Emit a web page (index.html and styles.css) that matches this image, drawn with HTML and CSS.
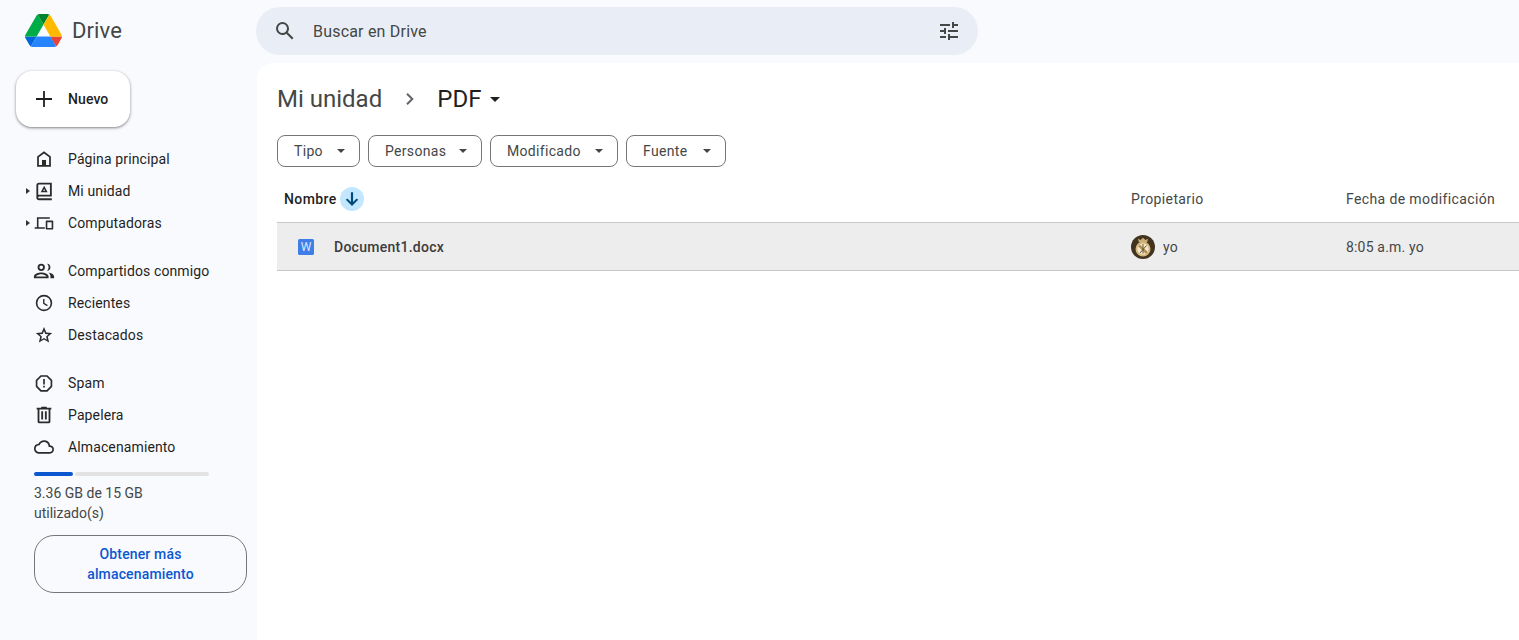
FILE: index.html
```html
<!DOCTYPE html>
<html lang="es">
<head>
<meta charset="utf-8">
<title>Drive</title>
<link rel="stylesheet" href="styles.css">
</head>
<body>
<div class="app">
  <aside class="sidebar">
    <div class="brand">
      <svg class="brand-logo" viewBox="0 0 87.3 78"><path d="m6.6 66.85 3.85 6.65c.8 1.4 1.95 2.5 3.3 3.3l13.75-23.8h-27.5c0 1.55.4 3.1 1.2 4.5z" fill="#0066da"/><path d="m43.65 25-13.75-23.8c-1.35.8-2.5 1.9-3.3 3.3l-25.4 44a9.06 9.06 0 0 0 -1.2 4.5h27.5z" fill="#00ac47"/><path d="m73.55 76.8c1.35-.8 2.5-1.9 3.3-3.3l1.6-2.75 7.65-13.25c.8-1.4 1.2-2.95 1.2-4.5h-27.502l5.852 11.5z" fill="#ea4335"/><path d="m43.65 25 13.75-23.8c-1.35-.8-2.9-1.2-4.5-1.2h-18.5c-1.6 0-3.15.45-4.5 1.2z" fill="#00832d"/><path d="m59.8 53h-32.3l-13.75 23.8c1.35.8 2.9 1.2 4.5 1.2h50.8c1.6 0 3.15-.45 4.5-1.2z" fill="#2684fc"/><path d="m73.4 26.5-12.7-22c-.8-1.4-1.95-2.5-3.3-3.3l-13.75 23.8 16.15 28h27.45c0-1.55-.4-3.1-1.2-4.5z" fill="#ffba00"/></svg>
      <span class="brand-name">Drive</span>
    </div>
    <button class="new-btn">
      <svg class="new-icon" viewBox="0 0 24 24"><path d="M20 12.9h-7.1V20h-1.8v-7.1H4v-1.8h7.1V4h1.8v7.1H20z"/></svg>
      <span>Nuevo</span>
    </button>
    <nav class="nav">
      <div class="nav-group">
        <a class="nav-item"><svg class="nav-icon" viewBox="0 0 24 24"><path d="M12 3.500 4.500 9.200V20.500h15V9.200L12 3.500zm5.600 15.100h-3.400v-5.400H9.800v5.400H6.400v-8.500L12 5.900l5.600 4.200v8.500z"/><path d="M9.800 13.200h4.400v5.800H9.800z"/></svg><span>Página principal</span></a>
        <a class="nav-item"><span class="tree-arrow"></span><svg class="nav-icon" viewBox="0 0 24 24"><path d="M6.500 3h14v15H6.700c-.6 0-1 .4-1 1s.4 1 1 1H20.500v2H6.700A3 3 0 0 1 3.700 19V5.800A2.800 2.800 0 0 1 6.500 3zm-.8 13.200c.3-.1.700-.2 1-.2h11.800V5H6.500c-.4 0-.8.4-.8.800v10.400z"/><path d="M12.200 6.400 16 13.400H8.400l3.800-7zm0 3.400-1.100 1.800h2.200l-1.100-1.800z"/></svg><span>Mi unidad</span></a>
        <a class="nav-item"><span class="tree-arrow"></span><svg class="nav-icon nav-icon-wide" viewBox="0 0 24 24"><path d="M3.500 5h15.500v2H5.400v10H13v2H.8v-2h2.700V5z"/><path d="M15 9h7.200c.5 0 .9.4.9.9V19c0 .5-.4.9-.9.9H15c-.5 0-.9-.4-.9-.9V9.900c0-.5.4-.9.9-.9zm1 2v7h5.200v-7H16z"/></svg><span>Computadoras</span></a>
      </div>
      <div class="nav-group">
        <a class="nav-item"><svg class="nav-icon" viewBox="0 0 24 24"><path d="M9 12a4 4 0 1 0 0-8 4 4 0 0 0 0 8zm0-6a2 2 0 1 1 0 4 2 2 0 0 1 0-4zm0 7.500c-3 0-8 1.500-8 4.300V20h16v-2.200c0-2.800-5-4.300-8-4.300zM3.100 18c.3-.9 3.500-2.500 5.900-2.500s5.600 1.600 5.900 2.500H3.100z"/><path d="M15.200 4.100c1.300.9 1.800 2.200 1.800 3.900s-.6 3-1.800 3.900c2.300.2 3.800-1.600 3.800-3.900s-1.500-4.100-3.800-3.900zM16.800 13.500c1.400 1 2.200 2.400 2.200 4.300V20h4v-2.200c0-2.300-3.800-3.900-6.200-4.300z"/></svg><span>Compartidos conmigo</span></a>
        <a class="nav-item"><svg class="nav-icon" viewBox="0 0 24 24"><path d="M12 3a9 9 0 1 0 0 18 9 9 0 0 0 0-18zm0 16.200a7.200 7.200 0 1 1 0-14.400 7.200 7.200 0 0 1 0 14.400z"/><path d="M12.500 7.500H11v5.400l4.300 2.600.8-1.200-3.600-2.200z"/></svg><span>Recientes</span></a>
        <a class="nav-item"><svg class="nav-icon" viewBox="0 0 24 24"><path d="M21 9.800l-6.500-.6L12 3.200 9.500 9.200 3 9.800l4.900 4.200-1.500 6.300L12 17l5.600 3.300-1.500-6.300L21 9.800zm-9 5.400-3.100 1.900.8-3.500-2.700-2.400 3.600-.3L12 7.600l1.400 3.300 3.600.3-2.700 2.400.8 3.500-3.100-1.900z"/></svg><span>Destacados</span></a>
      </div>
      <div class="nav-group">
        <a class="nav-item"><svg class="nav-icon" viewBox="0 0 24 24"><path d="M15.700 3.500H8.300L3 8.800v7.400l5.300 5.300h7.400l5.300-5.300V8.800l-5.300-5.300zm3.500 11.900-4.300 4.300H9.100l-4.300-4.300V9.600l4.300-4.300h5.800l4.300 4.300v5.800z"/><path d="M11.100 7.500h1.800v6h-1.800zM11.100 15h1.800v1.800h-1.800z"/></svg><span>Spam</span></a>
        <a class="nav-item"><svg class="nav-icon" viewBox="0 0 24 24"><path d="M15 4V3H9v1H4v2h1v13a2 2 0 0 0 2 2h10a2 2 0 0 0 2-2V6h1V4h-5zm2 15H7V6h10v13z"/><path d="M9 8h2v9H9zM13 8h2v9h-2z"/></svg><span>Papelera</span></a>
        <a class="nav-item"><svg class="nav-icon nav-icon-wide" viewBox="0 0 24 24"><path d="M19.350 10.040A7.490 7.490 0 0 0 12 4C9.110 4 6.600 5.640 5.350 8.040A5.994 5.994 0 0 0 0 14c0 3.310 2.690 6 6 6h13c2.760 0 5-2.240 5-5 0-2.640-2.050-4.780-4.650-4.960zM19 18H6c-2.210 0-4-1.790-4-4s1.790-4 4-4h.71C7.370 7.690 9.480 6 12 6a5.500 5.500 0 0 1 5.500 5.500v.5H19c1.660 0 3 1.340 3 3s-1.340 3-3 3z"/></svg><span>Almacenamiento</span></a>
      </div>
    </nav>
    <div class="storage">
      <div class="storage-bar"><div class="storage-used"></div><div class="storage-rest"></div></div>
      <p class="storage-text">3.36 GB de 15 GB utilizado(s)</p>
      <button class="storage-btn">Obtener más almacenamiento</button>
    </div>
  </aside>
  <div class="content">
    <header class="topbar">
      <div class="search">
        <svg class="search-icon" viewBox="0 0 24 24"><path d="M20.490 19l-5.730-5.730C15.530 12.200 16 10.910 16 9.500A6.500 6.500 0 1 0 9.500 16c1.410 0 2.700-.47 3.770-1.240L19 20.490 20.490 19zM5 9.500C5 7.010 7.010 5 9.500 5S14 7.010 14 9.500 11.990 14 9.500 14 5 11.990 5 9.500z"/></svg>
        <span class="search-text">Buscar en Drive</span>
        <svg class="tune-icon" viewBox="0 0 24 24"><path d="M3 17v2h6v-2H3zM3 5v2h10V5H3zm10 16v-2h8v-2h-8v-2h-2v6h2zM7 9v2H3v2h4v2h2V9H7zm14 4v-2H11v2h10zm-6-4h2V7h4V5h-4V3h-2v6z"/></svg>
      </div>
    </header>
    <main class="main">
      <div class="crumbs">
        <span class="crumb-root">Mi unidad</span>
        <svg class="crumb-sep" viewBox="0 0 24 24"><path d="M9.700 6 8.300 7.400 12.900 12l-4.600 4.600L9.700 18l6-6z"/></svg>
        <span class="crumb-current">PDF</span>
        <span class="caret caret-big"></span>
      </div>
      <div class="chips">
        <button class="chip"><span>Tipo</span><span class="caret"></span></button>
        <button class="chip"><span>Personas</span><span class="caret"></span></button>
        <button class="chip"><span>Modificado</span><span class="caret"></span></button>
        <button class="chip"><span>Fuente</span><span class="caret"></span></button>
      </div>
      <div class="table-head">
        <div class="col-name">
          <span class="head-strong">Nombre</span>
          <span class="sort-btn"><svg viewBox="0 0 24 24"><path d="M13.300 4h-2.600v11.600l-4.300-4.300L4.600 13l7.400 7.400 7.400-7.400-1.800-1.700-4.300 4.300z"/></svg></span>
        </div>
        <div class="head-cell">Propietario</div>
        <div class="head-cell">Fecha de modificación</div>
      </div>
      <div class="table-row">
        <div class="row-name">
          <span class="word-icon">W</span>
          <span class="file-name">Document1.docx</span>
        </div>
        <div class="row-owner">
          <svg class="avatar" viewBox="0 0 24 24">
            <circle cx="12" cy="12" r="12" fill="#43341f"/>
            <path d="M7.800 7.200 7 3.800l2.500 1.200L12 2.800l2.500 2.200L17 3.800l-.8 3.400z" fill="#c9ac78"/>
            <circle cx="12" cy="14" r="7.500" fill="#d4b87f"/>
            <circle cx="12" cy="14" r="5.600" fill="#f3e8cc"/>
            <path d="M8 10.500 16 18" stroke="#b08f55" stroke-width="2.400" fill="none"/>
            <path d="M15.500 10.500 9 18M12 9v9.500" stroke="#6d5530" stroke-width="1" fill="none"/>
          </svg>
          <span>yo</span>
        </div>
        <div class="row-date">8:05 a.m. yo</div>
      </div>
    </main>
  </div>
</div>
</body>
</html>
```
FILE: styles.css
```css
* { box-sizing: border-box; }
html, body { height: 100%; margin: 0; }
body {
  background: #f8fafd;
  color: #1f1f1f;
  font-family: Roboto, "Noto Sans", "Liberation Sans", sans-serif;
  font-size: 14px;
  overflow: hidden;
}
button { font: inherit; cursor: pointer; }

.app { display: flex; height: 640px; }

.sidebar { width: 256px; flex: none; display: flex; flex-direction: column; }
.brand { display: flex; align-items: center; height: 61px; padding-left: 25px; }
.brand-logo { width: 37px; height: 33px; }
.brand-name { margin-left: 10px; font-size: 22px; color: #444746; letter-spacing: .1px; }

.new-btn {
  display: flex; align-items: center;
  width: 114px; height: 56px;
  margin: 10px 0 0 16px; padding: 0 0 0 16px;
  background: #fff; border: 0; border-radius: 16px;
  box-shadow: 0 1px 2px rgba(0,0,0,.3), 0 1px 3px 1px rgba(0,0,0,.15);
  font-weight: 500; font-size: 14px; letter-spacing: .1px; color: #1f1f1f;
}
.new-icon { width: 24px; height: 24px; fill: #1f1f1f; margin-right: 12px; }

.nav { display: flex; flex-direction: column; gap: 16px; margin-top: 16px; }
.nav-group { display: flex; flex-direction: column; }
.nav-item {
  position: relative;
  display: flex; align-items: center;
  height: 32px; padding-left: 68px;
  color: #1f1f1f; letter-spacing: .12px;
}
.nav-icon { position: absolute; left: 33px; top: 5px; width: 22px; height: 22px; fill: #2b2b2b; }
.nav-icon-wide { width: 20px; height: 20px; left: 34px; top: 6px; }
.tree-arrow {
  position: absolute; left: 26px; top: 13px;
  border-left: 4px solid #333; border-top: 3px solid transparent; border-bottom: 3px solid transparent;
}

.storage { padding: 0 9px 0 34px; margin-top: 9px; }
.storage-bar { display: flex; gap: 2px; height: 4px; width: 175px; }
.storage-used { width: 39px; background: #0b57d0; border-radius: 2px; }
.storage-rest { flex: 1; background: #e3e3e3; border-radius: 2px; }
.storage-text { margin: 7px 0 0; width: 150px; line-height: 20px; color: #444746; letter-spacing: 0; }
.storage-btn {
  display: block; width: 213px; height: 58px; margin-top: 12px; padding: 0 40px;
  background: transparent; border: 1px solid #747775; border-radius: 20px;
  color: #0b57d0; font-weight: 500; line-height: 20px; font-size: 14px; letter-spacing: .15px;
}

.content { flex: 1; min-width: 0; display: flex; flex-direction: column; }
.topbar { height: 63px; padding-top: 7px; flex: none; }
.search {
  display: flex; align-items: center;
  width: 722px; height: 48px; padding: 0 7px 0 17px;
  background: #e9eef6; border-radius: 24px;
}
.search-icon { width: 24px; height: 24px; fill: #444746; }
.search-text { flex: 1; margin-left: 16px; font-size: 16px; letter-spacing: .2px; color: #444746; }
.tune-icon { width: 24px; height: 24px; fill: #444746; margin-right: 10px; }

.main {
  flex: 1; margin-left: 1px; padding-top: 16px;
  background: #fff; border-top-left-radius: 16px;
}
.crumbs { display: flex; align-items: center; height: 40px; padding-left: 20px; }
.crumb-root { font-size: 24px; color: #444746; }
.crumb-sep { width: 24px; height: 24px; fill: #5f6368; margin: 0 15px 0 16px; }
.crumb-current { font-size: 24px; color: #1f1f1f; letter-spacing: .1px; }

.caret { border-top: 5px solid #444746; border-left: 5px solid transparent; border-right: 5px solid transparent; width: 0; height: 0; }
.caret-big { margin-left: 8px; border-top-color: #1f1f1f; }

.chips { display: flex; gap: 8px; margin-top: 16px; padding-left: 20px; }
.chip {
  display: flex; align-items: center; justify-content: space-between;
  height: 32px; padding: 0 14px 0 16px;
  background: #fff; border: 1px solid #747775; border-radius: 8px;
  color: #444746; font-size: 14px; font-weight: 400; letter-spacing: .32px;
}
.chip:nth-child(1) { width: 83px; }
.chip:nth-child(2) { width: 114px; }
.chip:nth-child(3) { width: 128px; }
.chip:nth-child(4) { width: 100px; }
.chip .caret { border-top-width: 4px; border-left-width: 4.500px; border-right-width: 4.500px; }

.table-head, .table-row {
  display: grid; grid-template-columns: 854px 215px 1fr;
  margin-left: 20px;
}
.table-head { height: 44px; margin-top: 12px; align-items: center; padding-bottom: 3px; border-bottom: 1px solid #c7c7c7; }
.col-name { display: flex; align-items: center; gap: 3px; padding-left: 7px; }
.head-strong { font-weight: 500; color: #1f1f1f; letter-spacing: .4px; }
.sort-btn { display: flex; align-items: center; justify-content: center; width: 24px; height: 24px; border-radius: 50%; background: #c2e7ff; }
.sort-btn svg { width: 20px; height: 20px; fill: #004a77; }
.head-cell { color: #444746; font-weight: 400; letter-spacing: .38px; }

.table-row { height: 48px; align-items: center; background: #ededed; border-bottom: 1px solid #c7c7c7; color: #444746; letter-spacing: .18px; }
.row-name { display: flex; align-items: center; padding-left: 21px; }
.word-icon {
  display: flex; align-items: center; justify-content: center;
  width: 16px; height: 16px; border-radius: 1.500px;
  background: #3f7ee8; color: #dbe7fb; font-size: 12px; letter-spacing: 0;
}
.file-name { margin-left: 20px; font-weight: 500; letter-spacing: .27px; color: #3c3c3c; }
.row-owner { display: flex; align-items: center; gap: 8px; }
.avatar { width: 24px; height: 24px; }
.row-date { color: #444746; }
```
